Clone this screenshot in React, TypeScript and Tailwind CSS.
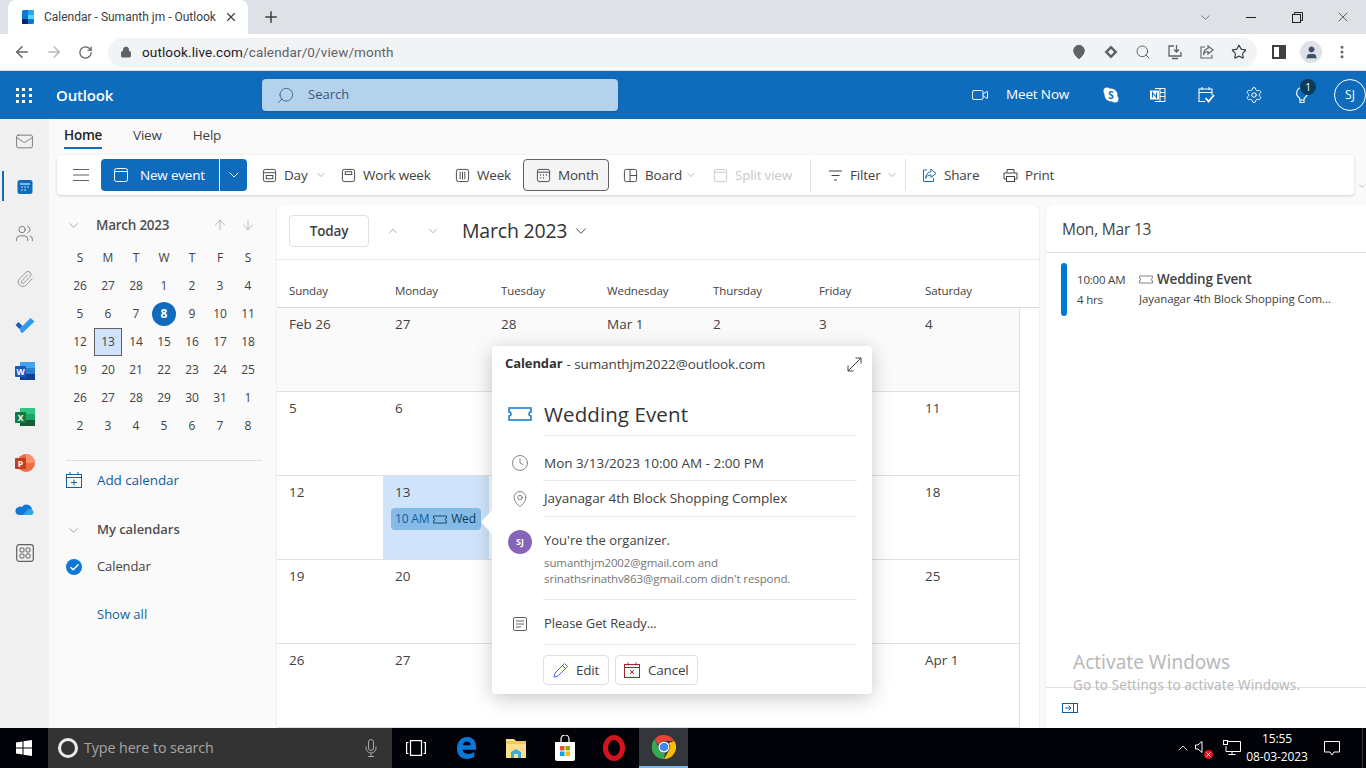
import { ArrowDown, ArrowLeft, ArrowRight, ArrowUp, Check, ChevronDown, ChevronUp, Clock, Lock, Mail, MapPin, MoreVertical, Paperclip, Plus, RotateCw, Search, Settings, Star, User, Users, Video, X } from "lucide-react";

const weeks = [
  ["26", "27", "28", "1", "2", "3", "4"],
  ["5", "6", "7", "8", "9", "10", "11"],
  ["12", "13", "14", "15", "16", "17", "18"],
  ["19", "20", "21", "22", "23", "24", "25"],
  ["26", "27", "28", "29", "30", "31", "1"],
  ["2", "3", "4", "5", "6", "7", "8"],
];

const monthRows = [
  ["Feb 26", "27", "28", "Mar 1", "2", "3", "4"],
  ["5", "6", "7", "8", "9", "10", "11"],
  ["12", "13", "14", "15", "16", "17", "18"],
  ["19", "20", "21", "22", "23", "24", "25"],
  ["26", "27", "28", "29", "30", "31", "Apr 1"],
];

const dayNames = ["Sunday", "Monday", "Tuesday", "Wednesday", "Thursday", "Friday", "Saturday"];

function Ticket({ className }: { className?: string }) {
  return (
    <svg viewBox="0 0 24 14" fill="none" stroke="currentColor" strokeWidth="1.5" className={className}>
      <path d="M1 1h22v4a2 2 0 0 0 0 4v4H1V9a2 2 0 0 0 0-4z" />
    </svg>
  );
}

function CalIcon({ kind, className }: { kind: string; className?: string }) {
  return (
    <svg viewBox="0 0 16 16" fill="none" stroke="currentColor" strokeWidth="1" className={className}>
      <rect x="1.5" y="1.5" width="13" height="13" rx="2" />
      {kind === "day" && <><path d="M1.5 5h13" /><rect x="4.5" y="8" width="7" height="3.5" /></>}
      {kind === "work" && <rect x="4.5" y="4" width="7" height="3" />}
      {kind === "week" && <path d="M5.5 4v8M8 4v8M10.500 4v8" />}
      {kind === "month" && <><path d="M1.5 4.5h13" /><path d="M4.5 7.5h1M7.5 7.5h1M10.5 7.5h1M4.5 10.5h1M7.5 10.5h1" strokeWidth="1.5" /></>}
      {kind === "board" && <path d="M7.500 1.500v13M7.500 8h7" />}
      {kind === "split" && <path d="M1.500 4.500h13" />}
      {kind === "new" && <path d="M1.5 4.5h13" />}
    </svg>
  );
}

function ToolItem({ w, icon, label, caret, faded }: { w: string; icon: React.ReactNode; label: string; caret?: boolean; faded?: boolean }) {
  return (
    <div className={`flex items-center h-full shrink-0 ${w} ${faded ? "text-[#c8c8c8]" : "text-[#424242]"}`}>
      <span className="w-[15px] h-[15px] mr-[7px] shrink-0">{icon}</span>
      <span className="text-[13.5px] whitespace-nowrap tracking-[-0.2px]">{label}</span>
      {caret && <ChevronDown className="ml-auto w-3 h-3 text-[#8a8a8a]" strokeWidth={1.25} />}
    </div>
  );
}

function RailItem({ children, active }: { children: React.ReactNode; active?: boolean }) {
  return (
    <div className="relative flex items-center justify-center h-[46px] w-[49px]">
      {active && <span className="absolute left-[2px] top-[7px] h-[30px] w-[2px] bg-[#0f6cbd]" />}
      {children}
    </div>
  );
}

function OfficeIcon({ letter, tile, shades }: { letter: string; tile: string; shades: string[] }) {
  return (
    <svg viewBox="0 0 20 20" className="w-5 h-5">
      <rect x="5" y="1" width="15" height="6" fill={shades[0]} />
      <rect x="5" y="7" width="15" height="6" fill={shades[1]} />
      <rect x="5" y="13" width="15" height="6" fill={shades[2]} />
      <rect x="0" y="5" width="11" height="11" rx="1" fill={tile} />
      <text x="5.5" y="13.5" textAnchor="middle" fontSize="8.5" fontWeight="700" fill="#fff">{letter}</text>
    </svg>
  );
}

function Divider() {
  return <div className="h-px bg-[#e8e8e8] ml-[51px] mr-[15px]" />;
}

function TitleBar() {
  return (
    <div className="h-[34px] bg-[#dee1e6] flex items-end relative shrink-0">
      <div className="ml-2 w-[240px] h-[34px] bg-white rounded-t-lg flex items-center pl-[14px] pr-[10px]">
        <svg viewBox="0 0 12 14" className="w-3 h-[14px] shrink-0">
          <rect width="12" height="14" rx="1.5" fill="#0f78d4" />
          <rect x="6" width="6" height="5" fill="#28a8ea" />
          <rect y="9" width="6" height="5" fill="#0a2767" />
          <rect x="6" y="5" width="6" height="4" fill="#50d9ff" />
        </svg>
        <span className="ml-[10px] text-[12px] text-[#3c4043] whitespace-nowrap overflow-hidden w-[174px] font-['Roboto',sans-serif]">Calendar - Sumanth jm - Outlook</span>
        <X className="ml-auto w-[14px] h-[14px] text-[#3c4043]" strokeWidth={2} />
      </div>
      <Plus className="ml-[14px] mb-[8px] w-[18px] h-[18px] text-[#3c4043]" strokeWidth={2} />
      <div className="ml-auto flex items-center h-full text-[#3c4043]">
        <div className="w-[46px] flex justify-center"><ChevronDown className="w-[15px] h-[15px]" strokeWidth={1} /></div>
        <div className="w-[46px] flex justify-center"><span className="w-[10px] h-px bg-[#202020]" /></div>
        <div className="w-[46px] flex justify-center">
          <svg viewBox="0 0 11 11" fill="none" stroke="#202020" className="w-[11px] h-[11px]"><rect x="0.5" y="2.5" width="8" height="8" /><path d="M2.5 2.5v-2h8v8h-2" /></svg>
        </div>
        <div className="w-[46px] flex justify-center"><X className="w-[16px] h-[16px] text-[#202020]" strokeWidth={1} /></div>
      </div>
    </div>
  );
}

function AddressBar() {
  return (
    <div className="h-[37px] bg-white flex items-center shrink-0 text-[#5f6368] border-b border-[#dadce0]">
      <ArrowLeft className="ml-[13px] w-[18px] h-[18px]" strokeWidth={2} />
      <ArrowRight className="ml-[14px] w-[18px] h-[18px] text-[#b8babd]" strokeWidth={2} />
      <RotateCw className="ml-[15px] w-[15px] h-[15px]" strokeWidth={2} />
      <div className="ml-[15px] w-[1149px] h-[29px] rounded-full bg-[#f1f3f4] flex items-center pl-[12px] pr-[10px]">
        <Lock className="w-[12px] h-[12px] fill-[#5f6368]" strokeWidth={2} />
        <span className="ml-[10px] text-[13.5px] font-['Roboto',sans-serif] text-[#5f6368] tracking-[0.13px]"><span className="text-[#202124]">outlook.live.com</span>/calendar/0/view/month</span>
        <div className="ml-auto flex items-center gap-[16px]">
          <MapPin className="w-4 h-4 fill-[#5f6368] text-[#5f6368]" strokeWidth={1.5} />
          <svg viewBox="0 0 16 16" className="w-4 h-4"><path d="M8 1.5 14.5 8 8 14.5 1.5 8z" fill="#5f6368" /><path d="M8 5 11 8 8 11 5 8z" fill="#f1f3f4" /></svg>
          <Search className="w-4 h-4" strokeWidth={1.5} />
          <svg viewBox="0 0 16 16" fill="none" stroke="#5f6368" strokeWidth="1.3" className="w-4 h-4"><path d="M7 2H2v10h12V8M9.5 1v7M7 5.5 9.5 8 12 5.5M5 14.5h6" /></svg>
          <svg viewBox="0 0 16 16" fill="none" stroke="#5f6368" strokeWidth="1.1" className="w-4 h-4"><path d="M6 3H2v11h11v-3M9 2l5 4-5 4V7.5C6.5 7.5 5 9 4.5 11 4.5 7.5 6.5 5 9 4.5z" /></svg>
          <Star className="w-4 h-4 text-[#3c4043]" strokeWidth={1.75} />
        </div>
      </div>
      <div className="ml-[15px] w-[14px] h-[14px] border-2 border-[#3c4043] flex justify-end"><span className="w-[5px] h-full bg-[#3c4043]" /></div>
      <div className="ml-[14px] w-[22px] h-[22px] rounded-full bg-[#dee1e6] flex items-center justify-center">
        <User className="w-[15px] h-[15px] fill-[#3c4f6b] text-[#3c4f6b]" strokeWidth={1.5} />
      </div>
      <MoreVertical className="ml-[12px] w-[16px] h-[16px] text-[#5f6368]" strokeWidth={2.5} />
    </div>
  );
}

function OutlookHeader() {
  return (
    <div className="h-[48px] bg-[#0f6cbd] flex items-center relative shrink-0 text-white">
      <div className="ml-[16px] grid grid-cols-3 gap-[3px] w-[16px]">
        {Array.from({ length: 9 }).map((_, i) => <span key={i} className="w-[3px] h-[3px] bg-white" />)}
      </div>
      <span className="ml-[24px] w-[206px] text-[15px] font-semibold tracking-[-0.15px]">Outlook</span>
      <div className="w-[356px] h-[32px] rounded bg-[#b4d2ec] flex items-center pl-[14px] shadow-sm">
        <Search className="w-[19px] h-[19px] text-[#2f5f8a] -scale-x-100" strokeWidth={1.1} />
        <span className="ml-[13px] text-[13px] text-[#38597a]">Search</span>
      </div>
      <div className="ml-auto flex items-center">
        <Video className="w-[18px] h-[18px]" strokeWidth={1.25} />
        <span className="ml-[17px] w-[97px] text-[13.5px] tracking-[-0.15px] -mt-[2px]">Meet Now</span>
        <svg viewBox="0 0 16 16" className="w-4 h-4 mr-[30px]">
          <circle cx="8" cy="8" r="6.500" fill="#fff" />
          <circle cx="4" cy="4" r="3.500" fill="#fff" />
          <circle cx="12" cy="12" r="3.500" fill="#fff" />
          <text x="8" y="11.500" textAnchor="middle" fontSize="10" fontWeight="700" fill="#0f6cbd">S</text>
        </svg>
        <svg viewBox="0 0 18 18" fill="none" stroke="#fff" className="w-[18px] h-[18px] mr-[30px]">
          <path d="M6 2.5h10v13H6M11 2.5v13M11 6.5h5M11 10.5h5" />
          <rect x="1" y="4.5" width="9" height="9" fill="#fff" stroke="none" />
          <path d="M3.5 11.5v-5l4 5v-5" stroke="#0f6cbd" strokeWidth="1.1" />
        </svg>
        <svg viewBox="0 0 18 18" fill="none" stroke="#fff" strokeWidth="1.1" className="w-[18px] h-[18px] mr-[30px]">
          <path d="M8 15.5H2V3h13v6M2 6.5h13M5 1v3M12 1v3" />
          <path d="m8.5 12 3 3.5L17 9" strokeWidth="1.8" />
        </svg>
        <Settings className="w-[18px] h-[18px] mr-[30px]" strokeWidth={1.25} />
        <div className="relative w-[18px] h-[18px] mr-[23px]">
          <svg viewBox="0 0 18 18" fill="none" stroke="#fff" strokeWidth="1.1" className="w-[18px] h-[18px]">
            <path d="M9 1.5a5.5 5.5 0 0 0-3 10c.8.7 1 1.2 1 2.5h4c0-1.3.2-1.8 1-2.5a5.5 5.5 0 0 0-3-10zM7 14v2.5h4V14" />
          </svg>
          <span className="absolute -top-[7px] left-[7px] w-4 h-4 rounded-full bg-[#0c3b5e] text-[10px] flex items-center justify-center">1</span>
        </div>
        <div className="w-[32px] h-[32px] rounded-full border border-white flex items-center justify-center text-[12px]">SJ</div>
      </div>
    </div>
  );
}

function Rail() {
  return (
    <div className="w-[49px] bg-[#f0f0f0] shrink-0 flex flex-col items-center text-[#616161]">
      <div className="-mt-px">
        <RailItem><Mail className="w-[19px] h-[19px]" strokeWidth={1} /></RailItem>
      </div>
      <RailItem active>
        <svg viewBox="0 0 16 16" className="w-4 h-4"><rect x="0.5" y="1" width="15" height="14" rx="2.5" fill="#0f6cbd" /><path d="M3 5h10" stroke="#fff" strokeWidth="1" /><path d="M4.5 8h1M7.5 8h1M10.5 8h1M4.5 11h1M7.5 11h1" stroke="#fff" strokeWidth="1.5" /></svg>
      </RailItem>
      <RailItem><Users className="w-[19px] h-[19px]" strokeWidth={1} /></RailItem>
      <RailItem><Paperclip className="w-[18px] h-[18px] text-[#858585]" strokeWidth={1.1} /></RailItem>
      <RailItem>
        <svg viewBox="0 0 20 16" className="w-5 h-4"><path d="M0.5 8 3.5 5l4 4-3 3z" fill="#185abd" /><path d="m4.5 12 3-3 8-8 4 3.5L8 15.5a1.5 1.5 0 0 1-2 0z" fill="#2f9bf0" /></svg>
      </RailItem>
      <RailItem><OfficeIcon letter="W" tile="#185abd" shades={["#41a5ee", "#2b7cd3", "#103f91"]} /></RailItem>
      <RailItem><OfficeIcon letter="X" tile="#107c41" shades={["#33c481", "#21a366", "#185c37"]} /></RailItem>
      <RailItem>
        <svg viewBox="0 0 20 20" className="w-5 h-5">
          <circle cx="11" cy="10" r="9" fill="#ed6c47" />
          <path d="M11 1a9 9 0 0 1 9 9h-9z" fill="#ff8f6b" />
          <rect x="0" y="5" width="11" height="11" rx="1" fill="#c43e1c" />
          <text x="5.5" y="13.5" textAnchor="middle" fontSize="8.5" fontWeight="700" fill="#fff">P</text>
        </svg>
      </RailItem>
      <RailItem>
        <svg viewBox="0 0 20 14" className="w-5 h-[14px]">
          <path d="M7 5a5.5 5.5 0 0 1 10 2.5L8 13H4a4 4 0 0 1-1-7.7A4 4 0 0 1 7 5z" fill="#0f78d4" />
          <path d="M7.5 13 13 7.5a3.5 3.5 0 0 1 4 .2A3 3 0 0 1 17 13z" fill="#28a8ea" />
        </svg>
      </RailItem>
      <div className="-mt-[2px]">
        <RailItem>
          <svg viewBox="0 0 18 18" fill="none" stroke="#616161" className="w-[18px] h-[18px]">
            <rect x="0.7" y="0.7" width="16.6" height="16.6" rx="2.5" strokeWidth="1.2" />
            <rect x="4" y="4" width="4" height="4" rx="1" /><rect x="10" y="4" width="4" height="4" rx="1" />
            <rect x="4" y="10" width="4" height="4" rx="1" /><rect x="10" y="10" width="4" height="4" rx="1" />
          </svg>
        </RailItem>
      </div>
    </div>
  );
}

function Ribbon() {
  return (
    <>
      <div className="h-[36px] flex items-center pl-[15px] pb-[4px] gap-[31px] text-[13.5px] text-[#424242] shrink-0">
        <span className="relative font-semibold text-[#242424] tracking-[-0.25px]">Home
          <span className="absolute left-0 right-0 -bottom-[4px] h-[2px] bg-[#0f6cbd]" />
        </span>
        <span className="tracking-[-0.2px]">View</span>
        <span className="tracking-[-0.2px]">Help</span>
      </div>
      <div className="relative shrink-0">
        <div className="ml-2 w-[1297px] h-[40px] rounded bg-white shadow-[0_1px_3px_rgba(0,0,0,0.18)] flex items-center pl-[16px]">
          <svg viewBox="0 0 16 12" fill="none" stroke="#616161" className="w-4 h-3 mr-[12px]"><path d="M0 .5h16M0 6h16M0 11.5h16" /></svg>
          <div className="w-[118px] h-[32px] bg-[#0f6cbd] rounded-l text-white flex items-center pl-[12px]">
            <CalIcon kind="new" className="w-[16px] h-[16px]" />
            <span className="ml-[11px] text-[13.5px] tracking-[-0.2px]">New event</span>
          </div>
          <div className="ml-px w-[27px] h-[32px] bg-[#0f6cbd] rounded-r text-white flex items-center justify-center mr-[15px]">
            <ChevronDown className="w-4 h-4" strokeWidth={1.5} />
          </div>
          <ToolItem w="w-[79px] pr-[14px] h-[32px]" icon={<CalIcon kind="day" />} label="Day" caret />
          <ToolItem w="w-[114px]" icon={<CalIcon kind="work" />} label="Work week" />
          <ToolItem w="w-[68px]" icon={<CalIcon kind="week" />} label="Week" />
          <div className="w-[86px] h-[32px] rounded border border-[#616161] bg-[#f5f5f5] flex items-center pl-[12px] shrink-0 mr-[14px]">
            <ToolItem w="" icon={<CalIcon kind="month" />} label="Month" />
          </div>
          <ToolItem w="w-[90px] pr-[16px]" icon={<CalIcon kind="board" />} label="Board" caret />
          <ToolItem w="w-[97px]" icon={<CalIcon kind="split" />} label="Split view" faded />
          <div className="w-px h-[32px] bg-[#e0e0e0] mr-[17px]" />
          <ToolItem w="w-[77px] pr-[7px]" icon={<svg viewBox="0 0 15 15" fill="none" stroke="currentColor"><path d="M1 3h13M3.5 7.5h8M6 12h3" /></svg>} label="Filter" caret />
          <div className="w-px h-[32px] bg-[#e0e0e0] mr-[16px]" />
          <ToolItem w="w-[81px]" icon={<svg viewBox="0 0 15 15" fill="none" stroke="#0f6cbd"><path d="M5 2H1.5v11.5h10V10M9 1l5 4.5L9 9.5V7C6.500 7 4.500 8 3.500 10.500 3.500 7 6 4 9 3.500z" /></svg>} label="Share" />
          <ToolItem w="w-[70px]" icon={<svg viewBox="0 0 15 15" fill="none" stroke="currentColor"><path d="M4 4.500V1.500h7v3M3.500 11H1V5h13v6h-2.500" /><rect x="3.500" y="8.500" width="8" height="5" /></svg>} label="Print" />
        </div>
        <ChevronDown className="absolute left-[1308px] top-[26px] w-[10px] h-[10px] text-[#8a8a8a]" strokeWidth={1.25} />
      </div>
    </>
  );
}

function LeftPane() {
  return (
    <div className="w-[228px] shrink-0 pl-[17px] pr-[15px] text-[#424242]">
      <div className="h-[39px] flex items-center pt-px">
        <ChevronDown className="w-[15px] h-[15px] text-[#757575]" strokeWidth={1} />
        <span className="ml-[15px] text-[13.5px] font-semibold text-[#505050] tracking-[-0.25px]">March 2023</span>
        <ArrowUp className="ml-auto w-4 h-4 text-[#9a9a9a]" strokeWidth={1} />
        <ArrowDown className="ml-[12px] mr-[6px] w-4 h-4 text-[#9a9a9a]" strokeWidth={1} />
      </div>
      <div className="grid grid-cols-[repeat(7,28px)] auto-rows-[28px] text-[12px] text-center items-center justify-items-center">
        {["S", "M", "T", "W", "T", "F", "S"].map((d, i) => <span key={i}>{d}</span>)}
        {weeks.flat().map((d, i) => {
          if (i === 10) return <span key={i} className="w-6 h-6 rounded-full bg-[#0f6cbd] text-white font-bold flex items-center justify-center">{d}</span>;
          if (i === 15) return <span key={i} className="w-7 h-7 bg-[#cfe4fa] border border-[#616161] flex items-center justify-center">{d}</span>;
          return <span key={i}>{d}</span>;
        })}
      </div>
      <div className="mt-[20px] h-px bg-[#e0e0e0]" />
      <div className="mt-[10px] h-[18px] flex items-center text-[#115ea3]">
        <svg viewBox="0 0 16 16" fill="none" stroke="#115ea3" className="w-4 h-4"><rect x="0.500" y="2.500" width="15" height="13" /><path d="M0.500 5.500h15M4 0v3M12 0v3M8 7.500v6M5 10.500h6" /></svg>
        <span className="ml-[15px] text-[13.5px] tracking-[-0.1px]">Add calendar</span>
      </div>
      <div className="mt-[32px] h-[18px] flex items-center">
        <ChevronDown className="w-[15px] h-[15px] text-[#757575]" strokeWidth={1} />
        <span className="ml-[16px] text-[13px] font-semibold text-[#505050] tracking-[-0.05px]">My calendars</span>
      </div>
      <div className="mt-[19px] h-[18px] flex items-center">
        <span className="w-4 h-4 rounded-full bg-[#0f78d4] flex items-center justify-center"><Check className="w-[11px] h-[11px] text-white" strokeWidth={3} /></span>
        <span className="ml-[15px] text-[13px] tracking-[-0.1px]">Calendar</span>
      </div>
      <div className="mt-[30px] pl-[31px] h-[18px] flex items-center text-[13px] text-[#115ea3]">Show all</div>
    </div>
  );
}

function Popup() {
  return (
    <div className="absolute left-[215px] top-[141px] w-[380px] h-[348px] bg-white rounded shadow-[0_4px_20px_rgba(0,0,0,0.22)] text-[#424242]">
      <span className="absolute -left-[11px] top-[164px] w-0 h-0 border-y-[12px] border-y-transparent border-r-[11px] border-r-white" />
      <div className="h-[36px] flex items-center pl-[13px] pr-[10px] text-[13.5px] tracking-[-0.1px]">
        <span className="font-bold text-[#333] text-[13px]">Calendar</span>
        <span className="ml-[4px]">- sumanthjm2022@outlook.com</span>
        <svg viewBox="0 0 15 15" fill="none" stroke="#424242" className="ml-auto w-[15px] h-[15px]"><path d="M1 14 14 1M8.500 1H14v5.500M1 8.500V14h5.500" /></svg>
      </div>
      <div className="h-[53px] flex items-center pl-[16px] pt-[11px]">
        <Ticket className="w-[24px] h-[14px] text-[#0f78d4]" />
        <span className="ml-[12px] text-[20.5px] font-medium text-[#333] tracking-[0.1px]">Wedding Event</span>
      </div>
      <Divider />
      <div className="h-[44px] flex items-center pl-[19px] pt-[10px]">
        <Clock className="w-[18px] h-[18px] text-[#616161]" strokeWidth={1} />
        <span className="ml-[15px] text-[13.5px]">Mon 3/13/2023 10:00 AM - 2:00 PM</span>
      </div>
      <Divider />
      <div className="h-[35px] flex items-center pl-[19px]">
        <MapPin className="w-[18px] h-[18px] text-[#616161]" strokeWidth={1} />
        <span className="ml-[15px] text-[13.5px] tracking-[-0.05px]">Jayanagar 4th Block Shopping Complex</span>
      </div>
      <Divider />
      <div className="h-[82px] flex pl-[16px] pt-[13px]">
        <span className="w-[24px] h-[24px] rounded-full bg-[#8764b8] text-white text-[9px] font-bold flex items-center justify-center">SJ</span>
        <div className="ml-[12px]">
          <div className="text-[13px] leading-[20px]">You're the organizer.</div>
          <div className="mt-[5px] text-[11.5px] leading-[16px] text-[#757575] tracking-[-0.1px]">sumanthjm2002@gmail.com and<br />srinathsrinathv863@gmail.com didn't respond.</div>
        </div>
      </div>
      <Divider />
      <div className="h-[44px] flex items-center pl-[21px] pt-[3px]">
        <svg viewBox="0 0 14 14" fill="none" stroke="#616161" className="w-[14px] h-[14px]"><rect x="0.500" y="0.500" width="13" height="13" rx="1.500" /><path d="M3 4h8M3 7h8M3 10h5" /></svg>
        <span className="ml-[17px] text-[13px] tracking-[-0.1px]">Please Get Ready...</span>
      </div>
      <Divider />
      <div className="mt-[10px] ml-[51px] flex gap-[6px] text-[13.5px]">
        <div className="w-[66px] h-[30px] border border-[#e0e0e0] rounded-sm flex items-center pl-[9px]">
          <svg viewBox="0 0 16 16" fill="none" stroke="#4f6bed" className="w-4 h-4"><path d="M1 15l1-4L11.500 1.500l3 3L5 14z" /><path d="m9.500 3.500 3 3" /></svg>
          <span className="ml-[7px] tracking-[-0.2px]">Edit</span>
        </div>
        <div className="w-[83px] h-[30px] border border-[#e0e0e0] rounded-sm flex items-center pl-[8px]">
          <svg viewBox="0 0 16 16" fill="none" stroke="#a4262c" className="w-4 h-4"><rect x="0.500" y="2.500" width="15" height="13" /><path d="M0.500 5.500h15M4 0.500v3M12 0.500v3M6 8l4 4M10 8l-4 4" /></svg>
          <span className="ml-[8px] tracking-[-0.2px]">Cancel</span>
        </div>
      </div>
    </div>
  );
}

function MonthView() {
  return (
    <div className="relative w-[762px] shrink-0 bg-white rounded-t-md shadow-[0_0_2px_rgba(0,0,0,0.15)] text-[#424242]">
      <div className="h-[54px] flex items-center pl-[12px] pb-[2px]">
        <div className="w-[80px] h-[32px] border border-[#e0e0e0] rounded-sm flex items-center justify-center text-[13.5px] font-semibold tracking-[-0.2px]">Today</div>
        <ChevronUp className="ml-[17px] w-[14px] h-[14px] text-[#757575]" strokeWidth={1} />
        <ChevronDown className="ml-[26px] w-[14px] h-[14px] text-[#757575]" strokeWidth={1} />
        <span className="ml-[22px] text-[19.5px] font-medium text-[#333] tracking-[-0.2px]">March 2023</span>
        <ChevronDown className="ml-[5px] w-[18px] h-[18px] text-[#424242]" strokeWidth={1.25} />
      </div>
      <div className="h-[48px] grid grid-cols-[repeat(7,106px)] items-end pb-[8px] border-t border-[#e8e8e8]">
        {dayNames.map((d) => <span key={d} className="pl-[12px] text-[11.5px] tracking-[-0.1px]">{d}</span>)}
      </div>
      <div className="flex border-t border-[#d8d8d8]">
        <div className="grid grid-cols-[repeat(7,106px)] auto-rows-[84px] border-r border-[#e0e0e0]">
          {monthRows.flat().map((d, i) => {
            const selected = i === 15;
            const past = i < 7;
            return (
              <div key={i} className={`pt-[6px] text-[13.5px] border-b border-[#e0e0e0] ${selected ? "bg-[#cfe4fa] pl-2" : past ? "bg-[#fafafa] pl-[12px]" : "bg-white pl-[12px]"}`}>
                <span className={selected ? "ml-1" : ""}>{d}</span>
                {selected && (
                  <div className="mt-[6px] w-[90px] h-[22px] rounded-sm bg-[#86bbe8] flex items-center pl-[4px] text-[12px] text-[#115ea3] whitespace-nowrap tracking-[-0.2px]">
                    10 AM
                    <Ticket className="mx-[4px] w-[14px] h-[9px] text-[#0c3b5e]" />
                    <span className="text-[#0c3b5e]">Wed</span>
                  </div>
                )}
              </div>
            );
          })}
        </div>
      </div>
      <Popup />
    </div>
  );
}

function AgendaPanel() {
  return (
    <div className="relative ml-[7px] flex-1 bg-white rounded-tl-md shadow-[0_0_2px_rgba(0,0,0,0.15)] flex flex-col text-[#424242]">
      <div className="h-[48px] flex items-center pl-[16px] pt-[2px] border-b border-[#e0e0e0] text-[15.5px] font-medium tracking-[-0.2px]">Mon, Mar 13</div>
      <div className="mt-[10px] ml-[15px] flex">
        <span className="w-[6px] h-[53px] rounded-sm bg-[#0078d4]" />
        <div className="ml-[10px] w-[62px] text-[11.5px] tracking-[-0.2px]">
          <div className="mt-[7px] leading-[20px]">10:00 AM</div>
          <div className="leading-[20px]">4 hrs</div>
        </div>
        <div className="w-[198px]">
          <div className="mt-[6px] flex items-center h-[20px]">
            <Ticket className="w-[14px] h-[9px] text-[#757575]" />
            <span className="ml-[4px] text-[13.5px] font-semibold tracking-[-0.2px]">Wedding Event</span>
          </div>
          <div className="truncate text-[11.5px] leading-[20px] tracking-[-0.1px]">Jayanagar 4th Block Shopping Complex</div>
        </div>
      </div>
      <div className="mt-auto h-[41px] border-t border-[#e0e0e0] flex items-center pl-[16px]">
        <svg viewBox="0 0 16 10" fill="none" stroke="#115ea3" className="w-4 h-[10px]"><rect x="0.500" y="0.500" width="15" height="9" /><path d="M11.500 0.500v9M3 5h6M6.500 2.500 9 5 6.500 7.500" /></svg>
      </div>
      <div className="absolute left-[27px] top-[445px] text-[#b9b9b9] pointer-events-none whitespace-nowrap font-['Noto_Sans',sans-serif]">
        <div className="text-[19px] leading-[24px]">Activate Windows</div>
        <div className="text-[13.5px] leading-[22px] tracking-[0.1px]">Go to Settings to activate Windows.</div>
      </div>
    </div>
  );
}

function Taskbar() {
  return (
    <div className="h-[40px] bg-[#020308] flex items-center shrink-0 text-white relative">
      <svg viewBox="0 0 16 16" className="ml-[16px] w-4 h-4 fill-white"><path d="M0 2.500 6.500 1.500v6H0zM7.500 1.300 16 0v7.500H7.500zM0 8.500h6.500v6L0 13.500zM7.500 8.500H16V16l-8.500-1.300z" /></svg>
      <div className="ml-[16px] w-[344px] h-full bg-[#333] flex items-center pl-[10px]">
        <span className="w-[20px] h-[20px] rounded-full border-[3px] border-white/90" />
        <span className="ml-[6px] text-[14.3px] text-[#a6a6a6] tracking-[-0.1px]">Type here to search</span>
        <svg viewBox="0 0 12 18" fill="none" stroke="#a6a6a6" className="ml-auto mr-[15px] w-3 h-[18px]"><rect x="3.500" y="0.500" width="5" height="11" rx="2.500" /><path d="M1 7.500v1.500a5 5 0 0 0 10 0V7.500M6 14v3.500M3 17.500h6" /></svg>
      </div>
      <svg viewBox="0 0 20 16" fill="none" stroke="#fff" strokeWidth="1.200" className="ml-[14px] w-5 h-4"><rect x="4.500" y="0.600" width="11" height="14.800" /><path d="M2.500 2.500H.6v11h1.900M17.500 2.500h1.900v11h-1.900" /></svg>
      <svg viewBox="0 0 22 26" className="ml-[31px] w-[20px] h-[24px]"><path d="M11 1C4 1 0 7 0 14c0 8 6 11 11 11 3 0 6-.8 8-2v-6c-2 1.500-4.500 2.500-7 2.500-3.500 0-5.500-1.800-5.800-4.500H21c.5-6-1-14-10-14zM6.500 10c.3-2.500 2-4.200 4.500-4.200s4 1.700 4 4.200z" fill="#0a78d7" /></svg>
      <svg viewBox="0 0 22 24" className="ml-[28px] w-[22px] h-[24px]"><path d="M1 3h8l2 2h10v17H1z" fill="#ffe08a" /><rect x="1" y="5" width="20" height="3" fill="#f3c95a" /><path d="M6 22v-6l5-3 5 3v6h-3v-4H9v4z" fill="#3fa9dc" /></svg>
      <svg viewBox="0 0 22 26" className="ml-[27px] w-[22px] h-[26px]"><path d="M7 8V4a4 4 0 0 1 8 0v4" fill="none" stroke="#fff" strokeWidth="1.200" /><path d="M1 7h20v17a2 2 0 0 1-2 2H3a2 2 0 0 1-2-2z" fill="#fff" /><rect x="6" y="11" width="4.500" height="4.500" fill="#f25022" /><rect x="11.500" y="11" width="4.500" height="4.500" fill="#7fba00" /><rect x="6" y="16.500" width="4.500" height="4.500" fill="#00a4ef" /><rect x="11.500" y="16.500" width="4.500" height="4.500" fill="#ffb900" /></svg>
      <svg viewBox="0 0 22 26" className="ml-[27px] w-[22px] h-[26px]"><ellipse cx="11" cy="13" rx="8.500" ry="10.500" fill="none" stroke="#d3141f" strokeWidth="5" /></svg>
      <div className="ml-[14px] w-[49px] h-full bg-[#33373b] border-b-2 border-[#76b9ed] flex items-center justify-center">
        <svg viewBox="0 0 24 24" className="w-6 h-6">
          <path d="M12 0a12 12 0 0 1 10.400 6H12a6 6 0 0 0-5.600 3.800L2.600 4.200A12 12 0 0 1 12 0z" fill="#ea4335" />
          <path d="M22.400 6A12 12 0 0 1 12 24l5.200-9A6 6 0 0 0 16.500 8z" fill="#fbbc04" />
          <path d="M12 24A12 12 0 0 1 2.600 4.200L7 13a6 6 0 0 0 6 5z" fill="#34a853" />
          <circle cx="12" cy="12" r="5.500" fill="#fff" />
          <circle cx="12" cy="12" r="4.300" fill="#4285f4" />
        </svg>
      </div>
      <div className="ml-auto flex items-center h-full">
        <ChevronUp className="w-[16px] h-[16px]" strokeWidth={1.25} />
        <div className="relative ml-[4px] w-[18px] h-[16px]">
          <svg viewBox="0 0 12 14" fill="none" stroke="#fff" className="w-3 h-[14px]"><path d="M.5 5v4h2.500L7 12.500v-11L3 5z" /></svg>
          <span className="absolute right-0 -bottom-[3px] w-[9px] h-[9px] rounded-full bg-[#e81123] flex items-center justify-center"><X className="w-[7px] h-[7px] text-white" strokeWidth={3} /></span>
        </div>
        <svg viewBox="0 0 18 16" fill="none" stroke="#fff" className="ml-[10px] w-[18px] h-[16px]"><path d="M4 1.500h13.500v10H3V6M9 11.500v3M5.500 14.500h7" /><rect x="0.500" y="0.500" width="4" height="4" /></svg>
        <div className="w-[72px] text-center text-[12px] leading-[18px] tracking-[-0.1px]">
          <div>15:55</div>
          <div>08-03-2023</div>
        </div>
        <svg viewBox="0 0 16 15" fill="none" stroke="#fff" className="ml-[11px] mr-[26px] w-4 h-[15px]"><path d="M.5.500h15v10.500H10l-2 3-2-3H.5z" /></svg>
      </div>
      <span className="absolute right-[3px] top-0 h-full w-px bg-[#3a3a3a]" />
    </div>
  );
}

export default function App() {
  return (
    <div className="w-[1366px] h-[768px] overflow-hidden flex flex-col bg-white font-['Open_Sans','Noto_Sans',sans-serif]">
      <TitleBar />
      <AddressBar />
      <OutlookHeader />
      <div className="flex flex-1 min-h-0">
        <Rail />
        <div className="flex-1 min-w-0 flex flex-col bg-[#fafafa]">
          <Ribbon />
          <div className="mt-[10px] flex flex-1 min-h-0 overflow-hidden">
            <LeftPane />
            <MonthView />
            <AgendaPanel />
          </div>
        </div>
      </div>
      <Taskbar />
    </div>
  );
}
